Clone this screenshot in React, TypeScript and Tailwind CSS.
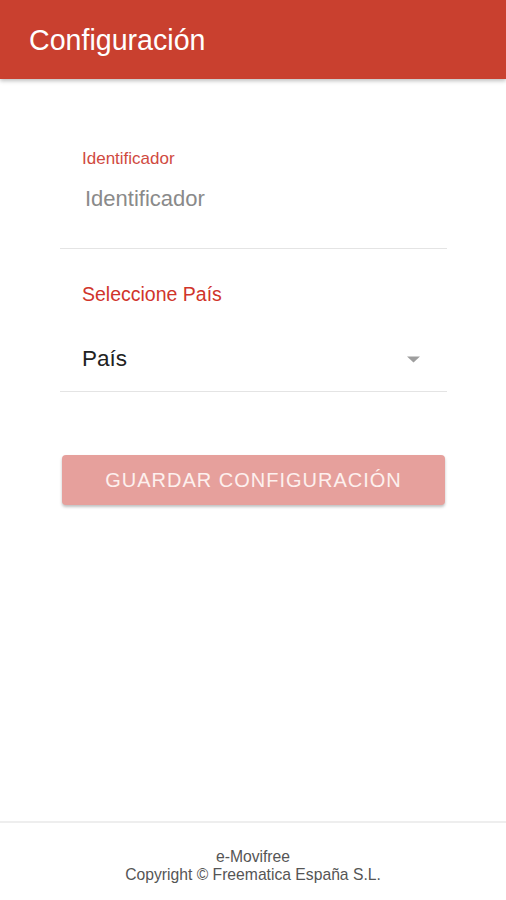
export default function App() {
  return (
    <div className="flex min-h-[900px] flex-col bg-white font-['Liberation_Sans',Arial,sans-serif]">
      <header className="flex h-[79px] items-center bg-[#c9402f] px-[29px] shadow-[0_2px_4px_rgba(0,0,0,0.25)]">
        <h1 className="text-[28.6px] leading-[32px] text-white">Configuración</h1>
      </header>

      <main className="flex flex-col pl-[60px] pr-[59px] pt-[70px]">
        <div className="flex flex-col border-b border-[#e4e4e4]">
          <label className="px-[22px] text-[17px] leading-[20px] text-[#d04a3f]">Identificador</label>
          <input
            className="mb-[36px] mt-[17px] h-[26px] px-[25px] text-[22px] leading-[26px] text-[#333] outline-none placeholder:text-[#8a8a8a]"
            placeholder="Identificador"
          />
        </div>

        <div className="flex flex-col border-b border-[#e4e4e4] pt-[33px]">
          <label className="px-[22px] text-[19.5px] leading-[24px] text-[#d0342b]">Seleccione País</label>
          <div className="flex items-center justify-between pb-[18px] pl-[22px] pr-[27px] pt-[39px]">
            <span className="text-[22.5px] leading-[28px] text-[#222]">País</span>
            <svg width="13" height="7" viewBox="0 0 13 7">
              <path d="M0 0.5 L6.5 6.5 L13 0.5 Z" fill="#9e9e9e" />
            </svg>
          </div>
        </div>

        <button className="mx-[2px] mt-[63px] h-[50px] rounded-[4px] bg-[#e6a09c] text-[20px] tracking-[1px] text-[#fdf0ee] shadow-[0_2px_3px_rgba(0,0,0,0.25)]">
          GUARDAR CONFIGURACIÓN
        </button>
      </main>

      <footer className="mt-auto flex h-[79px] flex-col items-center border-t-2 border-[#eeeeee] pt-[25px] text-[15.7px] leading-[18px] text-[#555]">
        <span>e-Movifree</span>
        <span>Copyright © Freematica España S.L.</span>
      </footer>
    </div>
  );
}
